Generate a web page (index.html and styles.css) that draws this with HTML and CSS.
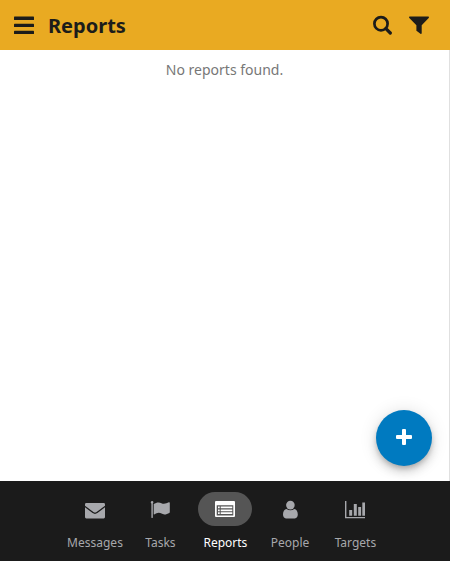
FILE: index.html
```html
<!DOCTYPE html>
<html lang="en">
<head>
<meta charset="utf-8">
<title>Reports</title>
<link rel="stylesheet" href="styles.css">
</head>
<body>
<div class="app">
  <header class="toolbar">
    <svg class="menu" width="20" height="20" viewBox="0 0 20 20"><g fill="currentColor"><rect y="1.6" width="20" height="3.4" rx=".6"/><rect y="8.8" width="20" height="3.2" rx=".6"/><rect y="15.7" width="20" height="3.3" rx=".6"/></g></svg>
    <h1 class="title">Reports</h1>
    <svg class="search" width="20" height="20" viewBox="0 0 20 20"><circle cx="8" cy="8.700" r="6.600" fill="none" stroke="currentColor" stroke-width="2.700"/><path d="M12.900 13.600 17.300 18" stroke="currentColor" stroke-width="3.200" stroke-linecap="round"/></svg>
    <svg class="filter" width="20" height="18" viewBox="0 0 20 18"><path fill="currentColor" d="M.9 .4h18.200c.8 0 1.200 1 .6 1.600L12.700 9.300V16.900c0 .9-1 1.300-1.600.7L7.800 15.100c-.2-.2-.4-.4-.4-.7V9.300L.3 2C-.3 1.400 .1 .4 .9 .4z"/></svg>
  </header>
  <main class="content">
    <p class="empty">No reports found.</p>
    <button class="fab" aria-label="Add report"><svg width="16" height="16" viewBox="0 0 16 16"><path fill="currentColor" d="M7 0h2q1 0 1 1v5h5q1 0 1 1v2q0 1-1 1h-5v5q0 1-1 1H7q-1 0-1-1v-5H1q-1 0-1-1V7q0-1 1-1h5V1q0-1 1-1z"/></svg></button>
  </main>
  <nav class="tabs">
    <a class="tab"><span class="pill"><svg width="20" height="20" viewBox="0 0 20 20"><path fill="currentColor" d="M1.200 3h17.600Q20 3 20 4.400v1.400L11.600 12q-1.600 1.200-3.200 0L0 5.800V4.400Q0 3 1.200 3zM0 7.300l7.600 5.800q2.400 1.600 4.800 0L20 7.300v9.800q0 1.300-1.300 1.300H1.300Q0 18.400 0 17.100z"/></svg></span><span class="label wide">Messages</span></a>
    <a class="tab"><span class="pill"><svg width="20" height="20" viewBox="0 0 20 20"><path fill="currentColor" d="M2.200 1a1.300 1.300 0 0 1 .6 2.400v14.200q0 .4-.4.400h-.6q-.4 0-.4-.4V3.400A1.300 1.300 0 0 1 2.200 1zM3.700 4.100c1.600-1 3.200-1.700 4.700-1.700 2.400 0 3.800 1.400 5.500 1.400 1.600 0 3.500-1 4.900-1.500q1-.3 1 .6v9.200q0 .5-.5.800c-1.500.8-3.200 1.500-4.900 1.500-2.500 0-3.200-1.600-5.700-1.600-1.400 0-3 .8-4.100 1.500q-.9.500-.9-.2z"/></svg></span><span class="label">Tasks</span></a>
    <a class="tab active"><span class="pill"><svg width="20" height="20" viewBox="0 0 20 20"><path fill="currentColor" fill-rule="evenodd" d="M1 1h18Q20 1 20 2v14q0 1-1 1H1q-1 0-1-1V2Q0 1 1 1zM1.700 5.200v10.200h16.600V5.200z"/><path fill="currentColor" d="M3 6.500h1.700v1.800H3zM5.700 6.500h11.600v1.800H5.700zM3 9.400h1.700v1.800H3zM5.700 9.400h11.600v1.800H5.700zM3 12.300h1.700v1.800H3zM5.700 12.300h11.600v1.800H5.700z"/></svg></span><span class="label">Reports</span></a>
    <a class="tab"><span class="pill"><svg width="20" height="20" viewBox="0 0 20 20"><circle cx="10.400" cy="5.100" r="4.300" fill="currentColor"/><path fill="currentColor" d="M6.600 9q1.500 1.200 3.800 1.200T14.200 9c2.400.2 3.600 2.500 3.600 5.500 0 2.200-1.200 3.900-3 3.900H6c-1.800 0-3-1.700-3-3.900 0-3 1.200-5.300 3.600-5.500z"/></svg></span><span class="label wide">People</span></a>
    <a class="tab"><span class="pill"><svg width="20" height="20" viewBox="0 0 20 20"><path fill="currentColor" d="M0 1h1.400v16H20v1.300H0zM4.200 10h3v5.800h-3zM8.800 4h3v11.800h-3zM13.200 7h2.900v8.800h-2.900zM17.300 2.600h2.700v13.200h-2.700z"/></svg></span><span class="label">Targets</span></a>
  </nav>
</div>
</body>
</html>
```

FILE: styles.css
```css
* { box-sizing: border-box; }
body { margin: 0; font-family: "Noto Sans", sans-serif; background: #fff; }
.app { height: 561px; display: flex; flex-direction: column; }
.toolbar { height: 50px; display: flex; align-items: center; padding: 0 21px 0 14px; background: #e9aa22; color: #1c1c1a; }
.title { margin: 0 auto 0 14px; font-size: 20px; line-height: 28px; font-weight: 700; padding-top: 2px; }
.search { margin-right: 16px; }
.content { flex: 1; position: relative; border-right: 1px solid #e0e0e0; }
.empty { margin: 10px 0 0; text-align: center; font-size: 14px; line-height: 20px; color: #777; }
.fab { position: absolute; right: 17px; bottom: 15px; width: 56px; height: 56px; padding: 0; border: 0; border-radius: 50%; display: flex; align-items: center; justify-content: center; background: #007ac0; color: #fff; box-shadow: 0 3px 5px -1px rgba(0,0,0,.2), 0 6px 10px rgba(0,0,0,.14), 0 1px 18px rgba(0,0,0,.12); }
.fab svg { margin-bottom: 2px; }
.tabs { position: relative; height: 80px; display: flex; justify-content: center; background: #1b1b1b; color: #a7a8ac; }
.tab { width: 65px; padding-top: 11px; display: flex; flex-direction: column; align-items: center; }
.pill { width: 54px; height: 34px; padding-top: 2px; border-radius: 17px; display: flex; align-items: center; justify-content: center; }
.label { margin-top: 8px; padding-left: .8px; font-size: 12px; line-height: 17px; }
.label.wide { padding-left: 0; }
.active { color: #fff; }
.active .pill { background: #555; }
```
